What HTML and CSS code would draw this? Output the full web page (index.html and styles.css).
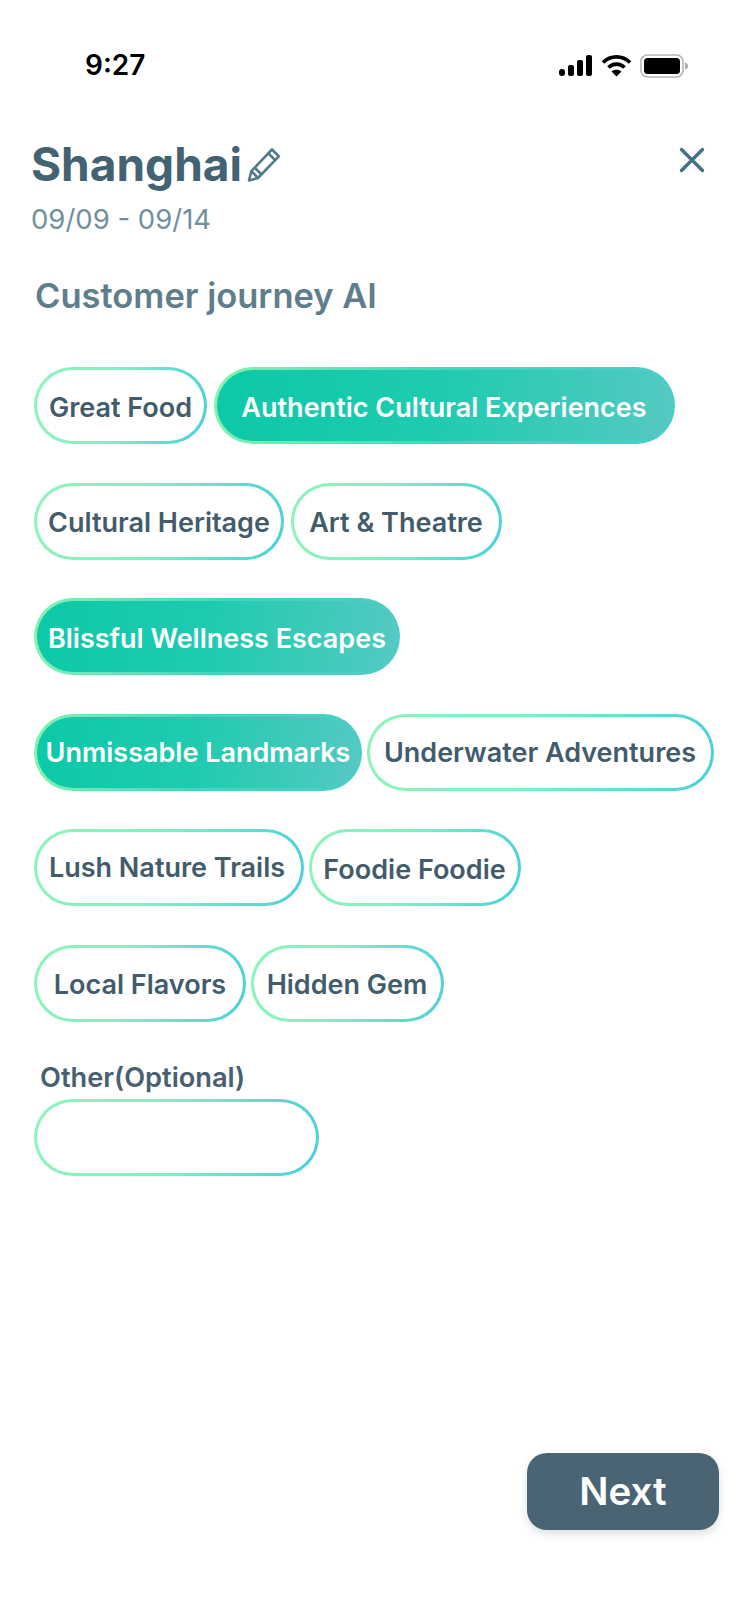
FILE: index.html
```html
<!DOCTYPE html>
<html lang="en">
<head>
<meta charset="utf-8">
<title>Customer journey AI</title>
<link rel="stylesheet" href="styles.css">
</head>
<body>
<div class="page">
  <div class="status">
    <span class="time">9:27</span>
    <div class="status-icons">
      <svg class="sig" width="34" height="22" viewBox="0 0 34 22"><g fill="#000"><rect x="0" y="14" width="6" height="7" rx="3"/><rect x="9" y="10" width="6" height="11" rx="2"/><rect x="18" y="5" width="6" height="16" rx="2"/><rect x="27" y="0" width="6" height="21" rx="2"/></g></svg>
      <svg class="wifi" width="31" height="23" viewBox="0 0 31 23"><g fill="none" stroke="#000" stroke-width="3.6"><path d="M2 8.5C9.5 1 21.500 1 29 8.500"/><path d="M7.500 13.500C12 9 19 9 23.500 13.500"/></g><path d="M15.500 22.500L10.500 17.500C13 15 18 15 20.500 17.500Z" fill="#000"/></svg>
      <svg class="batt" width="48" height="24" viewBox="0 0 48 24"><rect x="1" y="1" width="42" height="22" rx="6.500" fill="#fff" stroke="#b5b5b5" stroke-width="1.600"/><rect x="4" y="4" width="36" height="16" rx="3.500" fill="#000"/><path d="M45 8.500c2 .5 3 2 3 3.500s-1 3-3 3.500z" fill="#a8a8a8"/></svg>
    </div>
  </div>

  <header class="head">
    <div class="head-main">
      <div class="title-row">
        <h1 class="title">Shanghai</h1>
        <svg class="pencil" width="34" height="35" viewBox="0 0 34 35"><g fill="none" stroke="#557a8a" stroke-width="2.600" stroke-linejoin="round"><path d="M25 2.500l6.800 6.800L11 31l-9 2.500 2.300-9.300z"/><path d="M21.500 6.500l6.500 6.500M4.300 24.200l6.700 6.800M8 21l6.500 6.500"/></g></svg>
      </div>
      <div class="dates">09/09 - 09/14</div>
    </div>
    <svg class="close" width="26" height="26" viewBox="0 0 26 26"><path d="M2.500 2.500l21 21M23.500 2.500l-21 21" fill="none" stroke="#457082" stroke-width="3.400" stroke-linecap="round"/></svg>
  </header>

  <h2 class="sub">Customer journey AI</h2>

  <div class="rows">
    <div class="row"><span class="chip w173">Great Food</span><span class="chip on w461">Authentic Cultural Experiences</span></div>
    <div class="row"><span class="chip w250">Cultural Heritage</span><span class="chip w211">Art &amp; Theatre</span></div>
    <div class="row"><span class="chip on w366">Blissful Wellness Escapes</span></div>
    <div class="row tight"><span class="chip on flat w328">Unmissable Landmarks</span><span class="chip flat w347">Underwater Adventures</span></div>
    <div class="row tight"><span class="chip flat nudge w270">Lush Nature Trails</span><span class="chip w212">Foodie Foodie</span></div>
    <div class="row tight"><span class="chip w212">Local Flavors</span><span class="chip w193">Hidden Gem</span></div>
  </div>

  <label class="other-label" for="other">Other(Optional)</label>
  <input class="chip other" id="other" type="text">

  <div class="foot"><button class="next" type="button">Next</button></div>
</div>
</body>
</html>
```
FILE: styles.css
```css
* { box-sizing: border-box; }
html, body { margin: 0; padding: 0; background: #fff; }
body { font-family: Inter, "Liberation Sans", sans-serif; }
.page { width: 750px; height: 1624px; display: flex; flex-direction: column; overflow: hidden; }

.status { height: 78px; padding: 0 62px 0 85px; display: flex; justify-content: space-between; align-items: flex-end; }
.time { font-size: 28px; line-height: 34px; font-weight: 600; color: #000; margin-bottom: -4px; }
.status-icons { display: flex; align-items: flex-start; gap: 8px; }
.sig { margin-top: 1px; }

.head { margin-top: 62px; padding: 0 45px 0 31px; display: flex; justify-content: space-between; align-items: flex-start; }
.title-row { display: flex; align-items: center; gap: 5px; height: 48px; }
.title { margin: 0; font-size: 46px; line-height: 48px; font-weight: 700; color: #436272; }
.dates { margin-top: 15px; font-size: 27.500px; line-height: 32px; color: #70909c; }
.close { margin-top: 7px; }

.sub { margin: 40px 0 0 35px; font-size: 34.500px; line-height: 42px; font-weight: 600; color: #5f7e8c; }

.rows { margin: 50px 0 0 34px; display: flex; flex-direction: column; gap: 38.500px; }
.row { display: flex; gap: 6.500px; }
.row.tight { gap: 4.500px; }

.chip {
  display: flex; align-items: center; justify-content: center;
  height: 77px; padding-top: 3px; border: 3px solid transparent; border-radius: 38.500px;
  font-size: 27px; font-weight: 560; color: #435c6c; white-space: nowrap;
  background: linear-gradient(#fff, #fff) padding-box,
              linear-gradient(100deg, #8ef4b9 0%, #80f0c3 45%, #4ad0da 100%) border-box;
}
.chip.on {
  color: #fff;
  background: linear-gradient(95deg, #0cc9a8 0%, #20cbb0 50%, #55c9c2 100%) padding-box,
              linear-gradient(100deg, #84f3b2 0%, #3fd8bb 50%, #4ccbc8 100%) border-box;
}
.chip.flat { padding-top: 0; }
.chip.nudge { padding-right: 4px; }
.w173 { width: 173px; } .w461 { width: 461px; } .w250 { width: 250px; } .w211 { width: 211px; }
.w366 { width: 366px; } .w328 { width: 328px; } .w347 { width: 347px; } .w270 { width: 270px; }
.w212 { width: 212px; } .w193 { width: 193px; }

.other-label { margin: 40.500px 0 0 40px; font-size: 27.200px; line-height: 32px; font-weight: 560; color: #48606f; }
.other { margin: 5px 0 0 34px; width: 285px; flex: none; padding: 0 30px; outline: none; }

.foot { margin-top: auto; padding: 0 31px 94px 0; display: flex; justify-content: flex-end; }
.next {
  width: 192px; height: 77px; border: 0; border-radius: 20px; background: #4a6473;
  color: #fff; font: 560 38.500px/1 Inter, "Liberation Sans", sans-serif;
  box-shadow: 0 4px 8px rgba(74, 100, 115, .2);
}
```
